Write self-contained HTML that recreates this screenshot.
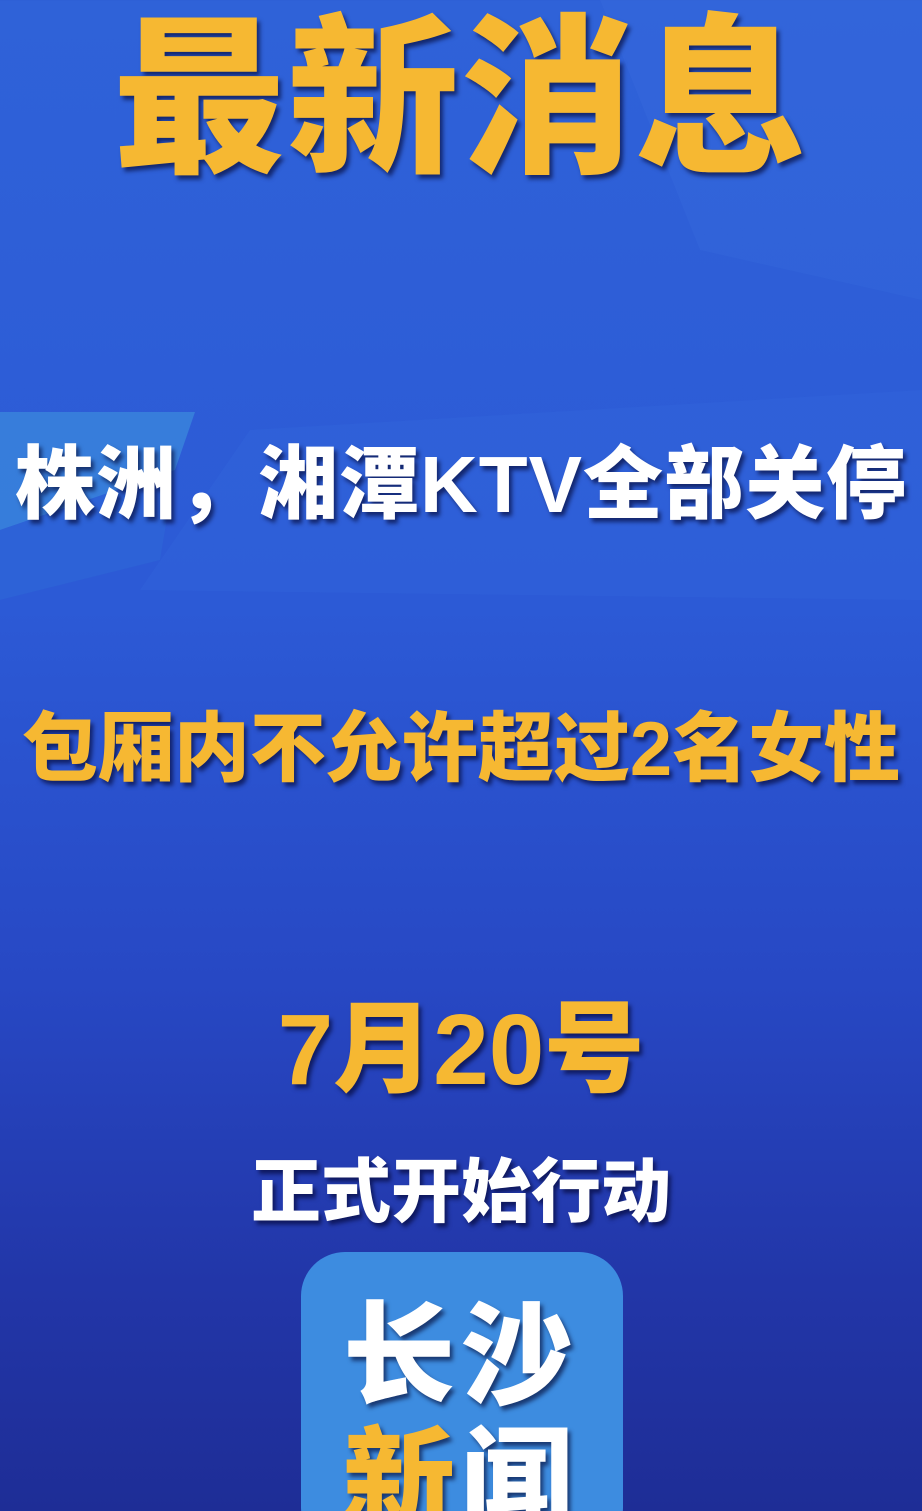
<!DOCTYPE html><html><head><meta charset="utf-8"><style>
html,body{margin:0;padding:0;width:922px;height:1511px;overflow:hidden}
body{position:relative;background:linear-gradient(180deg,#2f62d8 0%,#2c5ad6 40%,#2748c4 65%,#2236a8 85%,#1e2d96 100%);font-family:"Liberation Sans","Noto Sans CJK SC",sans-serif;font-weight:900}
.t{position:absolute;left:0;width:922px;text-align:center;white-space:nowrap;font-weight:900}
.y{color:#f6b832;text-shadow:3px 4px 4px rgba(0,0,40,.6)}
.w{color:#fff;text-shadow:3px 4px 4px rgba(0,0,40,.6)}
</style></head><body>
<svg style="position:absolute;left:0;top:0" width="922" height="1511">
<polygon points="0,412 195,412 175,470 0,530" fill="#3a86dc" opacity=".8"/>
<polygon points="0,530 175,470 160,560 0,600" fill="#2d6ad8" opacity=".5"/>
<polygon points="140,590 250,430 922,390 922,600" fill="#3468dc" opacity=".35"/>
<polygon points="600,0 922,0 922,300 700,250" fill="#3a6ee0" opacity=".25"/>
</svg>
<div class="t y" style="top:10px;font-size:172px;line-height:180px;letter-spacing:2px">最新消息</div>
<div class="t w" style="top:440px;font-size:80px;line-height:90px;letter-spacing:1px">株洲，湘潭KTV全部关停</div>
<div class="t y" style="top:705px;font-size:76px;line-height:90px">包厢内不允许超过2名女性</div>
<div class="t y" style="top:995px;font-size:100px;line-height:110px">7月20号</div>
<div class="t w" style="top:1152px;font-size:70px;line-height:80px">正式开始行动</div>
<div style="position:absolute;left:301px;top:1252px;width:322px;height:300px;border-radius:44px;background:#3d8ce0"></div>
<div class="t w" style="top:1295px;font-size:112px;line-height:124px;letter-spacing:6px">长沙</div>
<div class="t" style="top:1420px;font-size:112px;line-height:124px;letter-spacing:6px"><span class="y">新</span><span class="w">闻</span></div>
</body></html>
